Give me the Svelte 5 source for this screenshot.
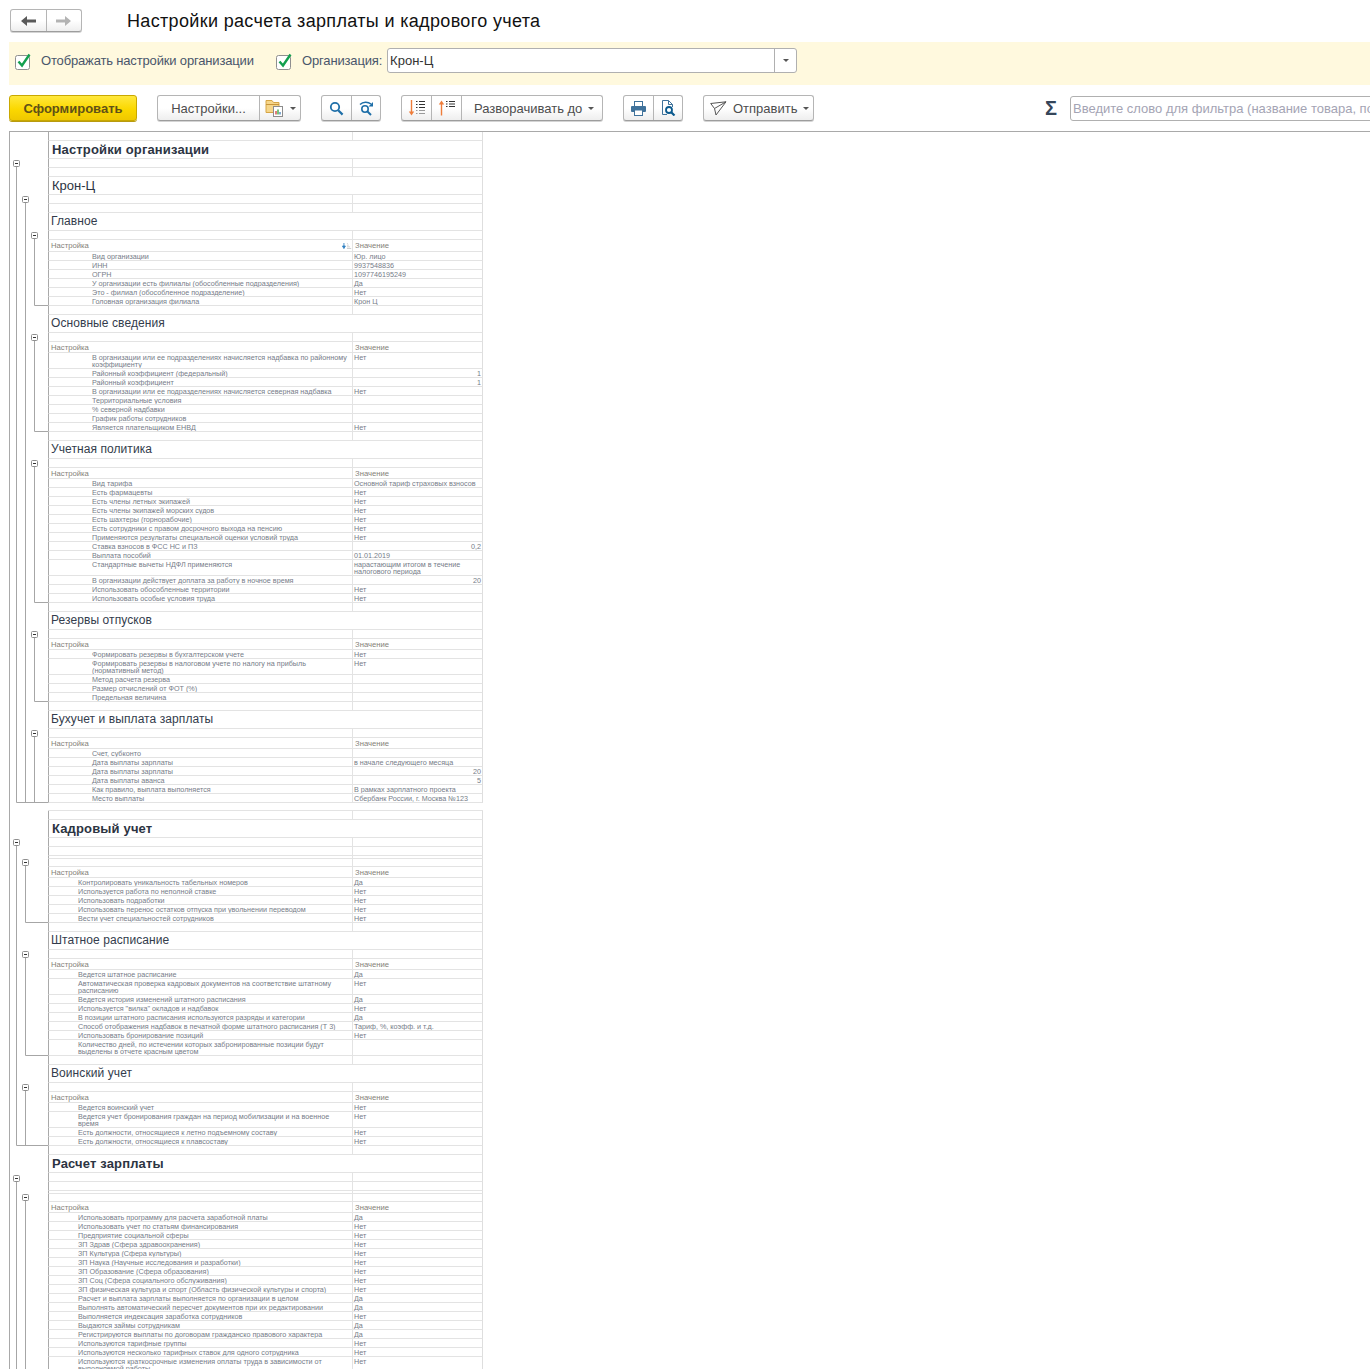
<script lang="ts">
  type Row = { kind: string; text?: string; value?: string; num?: boolean; indent?: string; sort?: boolean };

  // "label|value", a value starting with # is a right-aligned number
  function section(title: string, items: string[], indent: string, sort = false): Row[] {
    const rows: Row[] = [
      { kind: 'h2', text: title },
      { kind: 'blank' },
      { kind: sort ? 'head sorted' : 'head', sort }
    ];
    return rows.concat(items.map(parseItem(indent)), { kind: 'blank' });
  }

  function parseItem(indent: string) {
    return (item: string): Row => {
      const [text, value = ''] = item.split('|');
      const num = value.startsWith('#');
      const two = text.includes('\n') || value.includes('\n');
      return { kind: two ? 'row two' : 'row', text, value: num ? value.slice(1) : value, num, indent };
    };
  }

  const rows: Row[] = [
    { kind: 'blank' },
    { kind: 'h1', text: 'Настройки организации' },
    { kind: 'blank' },
    { kind: 'blank' },
    { kind: 'h1 org', text: 'Крон-Ц' },
    { kind: 'blank' },
    { kind: 'blank' },
    ...section('Главное', [
      'Вид организации|Юр. лицо',
      'ИНН|9937548836',
      'ОГРН|1097746195249',
      'У организации есть филиалы (обособленные подразделения)|Да',
      'Это - филиал (обособленное подразделение)|Нет',
      'Головная организация филиала|Крон Ц'
    ], 'deep', true),
    ...section('Основные сведения', [
      'В организации или ее подразделениях начисляется надбавка по районному\nкоэффициенту|Нет',
      'Районный коэффициент (федеральный)|#1',
      'Районный коэффициент|#1',
      'В организации или ее подразделениях начисляется северная надбавка|Нет',
      'Территориальные условия',
      '% северной надбавки',
      'График работы сотрудников',
      'Является плательщиком ЕНВД|Нет'
    ], 'deep'),
    ...section('Учетная политика', [
      'Вид тарифа|Основной тариф страховых взносов',
      'Есть фармацевты|Нет',
      'Есть члены летных экипажей|Нет',
      'Есть члены экипажей морских судов|Нет',
      'Есть шахтеры (горнорабочие)|Нет',
      'Есть сотрудники с правом досрочного выхода на пенсию|Нет',
      'Применяются результаты специальной оценки условий труда|Нет',
      'Ставка взносов в ФСС НС и ПЗ|#0,2',
      'Выплата пособий|01.01.2019',
      'Стандартные вычеты НДФЛ применяются|нарастающим итогом в течение\nналогового периода',
      'В организации действует доплата за работу в ночное время|#20',
      'Использовать обособленные территории|Нет',
      'Использовать особые условия труда|Нет'
    ], 'deep'),
    ...section('Резервы отпусков', [
      'Формировать резервы в бухгалтерском учете|Нет',
      'Формировать резервы в налоговом учете по налогу на прибыль\n(нормативный метод)|Нет',
      'Метод расчета резерва',
      'Размер отчислений от ФОТ (%)',
      'Предельная величина'
    ], 'deep'),
    ...section('Бухучет и выплата зарплаты', [
      'Счет, субконто',
      'Дата выплаты зарплаты|в начале следующего месяца',
      'Дата выплаты зарплаты|#20',
      'Дата выплаты аванса|#5',
      'Как правило, выплата выполняется|В рамках зарплатного проекта',
      'Место выплаты|Сбербанк России, г. Москва №123'
    ], 'deep').slice(0, -1),
    { kind: 'gap' },
    { kind: 'blank' },
    { kind: 'h1', text: 'Кадровый учет' },
    { kind: 'blank' },
    { kind: 'blank' },
    { kind: 'thin' },
    { kind: 'blank low' },
    { kind: 'head' },
    ...[
      'Контролировать уникальность табельных номеров|Да',
      'Используется работа по неполной ставке|Нет',
      'Использовать подработки|Нет',
      'Использовать перенос остатков отпуска при увольнении переводом|Нет',
      'Вести учет специальностей сотрудников|Нет'
    ].map(parseItem('mid')),
    { kind: 'blank' },
    ...section('Штатное расписание', [
      'Ведется штатное расписание|Да',
      'Автоматическая проверка кадровых документов на соответствие штатному\nрасписанию|Нет',
      'Ведется история изменений штатного расписания|Да',
      'Используется "вилка" окладов и надбавок|Нет',
      'В позиции штатного расписания используются разряды и категории|Да',
      'Способ отображения надбавок в печатной форме штатного расписания (Т 3)|Тариф, %, коэфф. и т.д.',
      'Использовать бронирование позиций|Нет',
      'Количество дней, по истечении которых забронированные позиции будут\nвыделены в отчете красным цветом'
    ], 'mid'),
    ...section('Воинский учет', [
      'Ведется воинский учет|Нет',
      'Ведется учет бронирования граждан на период мобилизации и на военное\nвремя|Нет',
      'Есть должности, относящиеся к летно подъемному составу|Нет',
      'Есть должности, относящиеся к плавсоставу|Нет'
    ], 'mid'),
    { kind: 'h1', text: 'Расчет зарплаты' },
    { kind: 'blank' },
    { kind: 'blank' },
    { kind: 'thin' },
    { kind: 'blank low' },
    { kind: 'head' },
    ...[
      'Использовать программу для расчета заработной платы|Да',
      'Использовать учет по статьям финансирования|Нет',
      'Предприятие социальной сферы|Нет',
      'ЗП Здрав (Сфера здравоохранения)|Нет',
      'ЗП Культура (Сфера культуры)|Нет',
      'ЗП Наука (Научные исследования и разработки)|Нет',
      'ЗП Образование (Сфера образования)|Нет',
      'ЗП Соц (Сфера социального обслуживания)|Нет',
      'ЗП физическая культура и спорт (Область физической культуры и спорта)|Нет',
      'Расчет и выплата зарплаты выполняется по организации в целом|Да',
      'Выполнять автоматический пересчет документов при их редактировании|Да',
      'Выполняется индексация заработка сотрудников|Нет',
      'Выдаются займы сотрудникам|Да',
      'Регистрируются выплаты по договорам гражданско правового характера|Да',
      'Используются тарифные группы|Нет',
      'Используются несколько тарифных ставок для одного сотрудника|Нет',
      'Используются краткосрочные изменения оплаты труда в зависимости от\nвыполняемой работы|Нет'
    ].map(parseItem('mid'))
  ];

  // outline tree in the gutter, in page coordinates: x, y of the box, y of the end, closes with a bracket
  const tree = [
    { x: 16, y: 163, end: 802, foot: true },
    { x: 25, y: 199, end: 802, foot: false },
    { x: 34, y: 235, end: 305, foot: true },
    { x: 34, y: 337, end: 431, foot: true },
    { x: 34, y: 463, end: 602, foot: true },
    { x: 34, y: 634, end: 701, foot: true },
    { x: 34, y: 733, end: 802, foot: false },
    { x: 16, y: 842, end: 1145, foot: true },
    { x: 25, y: 862, end: 922, foot: true },
    { x: 25, y: 954, end: 1055, foot: true },
    { x: 25, y: 1087, end: 1145, foot: false },
    { x: 16, y: 1178, end: 1369, foot: false },
    { x: 25, y: 1197, end: 1369, foot: false }
  ];
</script>

{#snippet check()}
  <svg class="check" width="17" height="18" viewBox="0 0 17 18">
    <rect x="0.5" y="3.5" width="14" height="14" rx="2" fill="#fff" stroke="#8f8f8f" />
    <path d="M3.5 9.5 L7 13.5 L14.5 2.5" fill="none" stroke="#13a04f" stroke-width="2.4" />
  </svg>
{/snippet}

{#snippet caret()}
  <span class="caret"></span>
{/snippet}

<div class="page">
  <header class="titlebar">
    <div class="btn-group nav">
      <button class="seg nav-seg" aria-label="Назад">
        <svg width="16" height="10" viewBox="0 0 16 10"><path d="M0 5 L6 0 V3.4 H15 V6.6 H6 V10 Z" fill="#5a5a5a" /></svg>
      </button>
      <button class="seg nav-seg" aria-label="Вперед">
        <svg width="16" height="10" viewBox="0 0 16 10"><path d="M15 5 L9 0 V3.4 H0 V6.6 H9 V10 Z" fill="#b3b3b3" /></svg>
      </button>
    </div>
    <h1>Настройки расчета зарплаты и кадрового учета</h1>
  </header>

  <section class="params">
    {@render check()}
    <span class="param-label first">Отображать настройки организации</span>
    {@render check()}
    <span class="param-label">Организация:</span>
    <div class="org-field">
      <span class="org-value">Крон-Ц</span>
      <span class="org-drop">{@render caret()}</span>
    </div>
  </section>

  <div class="toolbar">
    <button class="primary">Сформировать</button>

    <div class="btn-group">
      <button class="seg settings">Настройки...</button>
      <button class="seg variant">
        <svg width="20" height="20" viewBox="0 0 20 20">
          <path d="M1 5.5 V2.5 H7 L8.5 4.5 H14 V14.5 H1 Z" fill="#f6d68a" stroke="#d6a545" />
          <path d="M1 6.5 H14" stroke="#c9963a" />
          <rect x="8.5" y="8.5" width="9" height="10" fill="#fff" stroke="#8c8c8c" />
          <path d="M11 16.5 V13" stroke="#d9534f" stroke-width="1.5" />
          <path d="M13 16.5 V11.5" stroke="#4caf50" stroke-width="1.5" />
          <path d="M15 16.5 V14" stroke="#5a8fc4" stroke-width="1.5" />
        </svg>
        {@render caret()}
      </button>
    </div>

    <div class="btn-group">
      <button class="seg icon" aria-label="Найти">
        <svg width="15" height="15" viewBox="0 0 15 15">
          <circle cx="6" cy="6" r="4.2" fill="none" stroke="#1f6fa8" stroke-width="1.8" />
          <path d="M9.2 9.2 L13.6 13.6" stroke="#1f6fa8" stroke-width="2.2" />
        </svg>
      </button>
      <button class="seg icon" aria-label="Найти далее">
        <svg width="15" height="15" viewBox="0 0 15 15">
          <path d="M1 3.5 C4 0.5 9 0.5 12 3" fill="none" stroke="#1f6fa8" stroke-width="1.5" />
          <path d="M14 1 V5.5 H9.5 Z" fill="#1f6fa8" />
          <circle cx="6" cy="8" r="3.2" fill="none" stroke="#1f6fa8" stroke-width="1.6" />
          <path d="M8.5 10.5 L12 14" stroke="#1f6fa8" stroke-width="2" />
        </svg>
      </button>
    </div>

    <div class="btn-group">
      <button class="seg icon" aria-label="Развернуть">
        <svg width="18" height="16" viewBox="0 0 18 16">
          <path d="M3.5 0 V13" stroke="#ee7d3b" stroke-width="1.4" />
          <path d="M0.8 11.5 H6.2 L3.5 15.5 Z" fill="#ee7d3b" />
          <path d="M8 1.5 H9.5 M11 1.5 H17 M8 4.5 H9.5 M11 4.5 H17 M8 7.5 H9.5 M11 7.5 H17" stroke="#333" />
          <path d="M8 10.5 H9.5 M11 10.5 H17 M8 13.5 H9.5 M11 13.5 H17" stroke="#9a9a9a" />
        </svg>
      </button>
      <button class="seg icon wide" aria-label="Свернуть">
        <svg width="18" height="16" viewBox="0 0 18 16">
          <path d="M3.5 15.5 V3" stroke="#ee7d3b" stroke-width="1.4" />
          <path d="M0.8 4.5 H6.2 L3.5 0.5 Z" fill="#ee7d3b" />
          <path d="M8 1.5 H9.5 M11 1.5 H17 M8 4 H9.5 M11 4 H17 M8 6.5 H9.5 M11 6.5 H17" stroke="#333" />
        </svg>
      </button>
      <button class="seg expand">Разворачивать до {@render caret()}</button>
    </div>

    <div class="btn-group">
      <button class="seg icon" aria-label="Печать">
        <svg width="15" height="15" viewBox="0 0 15 15">
          <rect x="3.5" y="0.5" width="8" height="5" fill="#fff" stroke="#3f729b" />
          <rect x="0" y="5" width="15" height="6" rx="1" fill="#3f729b" />
          <rect x="3.5" y="9" width="8" height="5.5" fill="#fff" stroke="#3f729b" />
        </svg>
      </button>
      <button class="seg icon" aria-label="Предварительный просмотр">
        <svg width="15" height="16" viewBox="0 0 15 16">
          <path d="M1.5 14.5 V0.5 H7.5 L11.5 4.5 V7 M7.5 0.5 V4.5 H11.5 M1.5 14.5 H6" fill="none" stroke="#3f729b" />
          <circle cx="8" cy="10" r="3" fill="#fff" stroke="#0b5a8e" stroke-width="1.8" />
          <path d="M10 12 L13.5 15.5" stroke="#0b5a8e" stroke-width="2.2" />
        </svg>
      </button>
    </div>

    <button class="single">
      <svg width="17" height="15" viewBox="0 0 17 15">
        <path d="M0.7 2.5 L16 0.8 L6 14 L4.5 7.5 Z M4.5 7.5 L16 0.8" fill="none" stroke="#555" />
      </svg>
      Отправить {@render caret()}
    </button>

    <span class="sigma">Σ</span>
    <input class="filter" placeholder="Введите слово для фильтра (название товара, поставщика)" />
  </div>

  <div class="report">
    <div class="gutter">
      <svg width="38" height="1237" viewBox="10 132 38 1237">
        {#each tree as node}
          <path d="M{node.x + 0.5} {node.y} V{node.end + 0.5}{node.foot ? ` H48` : ''}" fill="none" stroke="#a6a6a6" />
        {/each}
        <path d="M34.5 802.5 H48" stroke="#a6a6a6" />
        {#each tree as node}
          <rect x={node.x - 2.5} y={node.y - 2.5} width="6" height="6" rx="1" fill="#fff" stroke="#8f8f8f" />
          <path d="M{node.x - 1} {node.y + 0.5} H{node.x + 2}" stroke="#333" />
        {/each}
      </svg>
    </div>

    <div class="sheet">
      {#each rows as row}
        <div class="rp {row.kind}">
          {#if row.kind.startsWith('h1') || row.kind === 'h2'}
            <div class="span">{row.text}</div>
          {:else if row.kind.startsWith('head')}
            <div class="cell name">
              Настройка
              {#if row.sort}
                <svg class="sort" width="11" height="6" viewBox="0 0 11 7">
                  <path d="M2.5 0 V4 M0.8 3.5 H4.2 L2.5 6.5 Z" fill="#2f7fc1" stroke="#2f7fc1" />
                  <path d="M6 6.5 H11 M6 4.5 H9.5 M6 2.5 H8 M6 0.5 H7" stroke="#c4c4c4" />
                </svg>
              {/if}
            </div>
            <div class="cell val">Значение</div>
          {:else if row.kind.startsWith('row')}
            <div class="cell name {row.indent}">{row.text}</div>
            <div class="cell val" class:num={row.num}>{row.value}</div>
          {:else if row.kind !== 'gap'}
            <div class="cell"></div>
            <div class="cell"></div>
          {/if}
        </div>
      {/each}
    </div>
  </div>
</div>

<style>
  :global(body) {
    margin: 0;
    background: #fff;
  }

  .page {
    width: 1370px;
    height: 1369px;
    overflow: hidden;
    font-family: "Liberation Sans", Arial, sans-serif;
    color: #4d4d4d;
  }

  button {
    font: inherit;
    color: inherit;
    cursor: pointer;
  }

  .titlebar {
    display: flex;
    align-items: center;
    height: 42px;
    box-sizing: border-box;
    padding: 0 0 0 10px;
  }

  .titlebar h1 {
    margin: 0 0 0 45px;
    font-size: 18px;
    font-weight: 400;
    letter-spacing: 0.34px;
    color: #111;
  }

  .btn-group {
    display: flex;
    flex: none;
    height: 26px;
    box-sizing: border-box;
    border: 1px solid #b5b5b5;
    border-bottom-color: #9d9d9d;
    border-radius: 3px;
    background: linear-gradient(#fff, #fff 50%, #eeeeee);
    box-shadow: 0 1px 0 #d4d4d4;
  }

  .btn-group.nav {
    height: 23px;
    margin-top: -1px;
  }

  .seg {
    display: flex;
    align-items: center;
    justify-content: center;
    background: none;
    border: 0;
    border-left: 1px solid #b5b5b5;
    padding: 0;
    height: 100%;
  }

  .seg:first-child {
    border-left: 0;
  }

  .nav-seg {
    width: 35px;
  }

  .params {
    display: flex;
    align-items: center;
    height: 43px;
    margin-left: 9px;
    box-sizing: border-box;
    padding: 0 0 6px 6px;
    background: #fff9de;
    font-size: 13px;
  }

  .check {
    flex: none;
  }

  .param-label {
    flex: none;
    margin-left: 9px;
    color: #4a566b;
    letter-spacing: -0.16px;
  }

  .param-label.first {
    width: 214px;
    margin-right: 21px;
  }

  .org-field {
    display: flex;
    align-items: center;
    justify-content: space-between;
    width: 410px;
    height: 25px;
    margin-left: 5px;
    box-sizing: border-box;
    border: 1px solid #b0b0b0;
    border-radius: 3px;
    background: #fff;
  }

  .org-value {
    padding-left: 2px;
    color: #333;
  }

  .org-drop {
    display: flex;
    align-items: center;
    justify-content: center;
    width: 21px;
    height: 100%;
    border-left: 1px solid #b0b0b0;
  }

  .caret {
    display: inline-block;
    width: 0;
    height: 0;
    border: 3.5px solid transparent;
    border-top: 3.5px solid #555;
    border-bottom: 0;
  }

  .toolbar {
    display: flex;
    align-items: center;
    gap: 20px;
    height: 26px;
    margin: 10px 0 0 9px;
    font-size: 13px;
    overflow: hidden;
    padding-bottom: 2px;
  }

  .primary {
    width: 128px;
    height: 26px;
    padding: 0;
    flex: none;
    border: 1px solid #c9a800;
    border-radius: 3px;
    background: linear-gradient(#ffe83d, #fbd800 55%, #efc800);
    box-shadow: 0 1px 0 #b89b10;
    font-weight: 700;
    color: #5f5118;
  }

  .settings {
    width: 101px;
  }

  .variant {
    width: 41px;
    gap: 5px;
  }

  .icon {
    width: 29px;
  }

  .icon.wide {
    width: 30px;
  }

  .expand {
    width: 141px;
    gap: 6px;
    justify-content: flex-start;
    padding-left: 12px;
  }

  .single {
    display: flex;
    align-items: center;
    gap: 6px;
    flex: none;
    width: 111px;
    height: 26px;
    padding: 0 0 0 6px;
    border: 1px solid #b5b5b5;
    border-bottom-color: #9d9d9d;
    border-radius: 3px;
    background: linear-gradient(#fff, #fff 50%, #eeeeee);
    box-shadow: 0 1px 0 #d4d4d4;
  }

  .sigma {
    margin-left: 209px;
    font-size: 20px;
    font-weight: 700;
    color: #35465a;
    width: 16px;
    flex: none;
    text-align: center;
    line-height: 26px;
  }

  .filter {
    flex: none;
    width: 320px;
    height: 25px;
    margin-left: -9px;
    box-sizing: border-box;
    border: 1px solid #b0b0b0;
    border-radius: 3px;
    padding: 0 2px;
    font: inherit;
    outline: none;
  }

  .filter::placeholder {
    color: #a4a4b4;
    opacity: 1;
  }

  .report {
    display: flex;
    margin: 8px 0 0 9px;
    border-top: 1px solid #a9a9a9;
    border-left: 1px solid #a9a9a9;
  }

  .gutter {
    flex: none;
    width: 38px;
  }

  .gutter svg {
    display: block;
  }

  .sheet {
    flex: none;
    width: 435px;
  }

  .rp {
    display: grid;
    grid-template-columns: 304px 129px;
    box-sizing: border-box;
    height: 9px;
    border-left: 1px solid #a9a9a9;
    border-right: 1px solid #dedede;
    border-bottom: 1px solid #e3e3e3;
    font-size: 7.2px;
    line-height: 8px;
    color: #767c88;
  }

  .rp.blank.low {
    height: 8px;
  }

  .rp.thin {
    height: 3px;
  }

  .rp.gap {
    height: 8px;
    border-left: 0;
    border-right: 0;
  }

  .rp.h1,
  .rp.h2 {
    display: block;
    height: 18px;
  }

  .span {
    line-height: 17px;
    padding-left: 3px;
    white-space: nowrap;
  }

  .rp.h1 {
    font-size: 13px;
    font-weight: 700;
    letter-spacing: 0.15px;
    color: #2c3442;
  }

  .rp.h1.org {
    font-weight: 400;
    letter-spacing: 0;
  }

  .rp.h2 {
    font-size: 12px;
    letter-spacing: 0.08px;
    color: #333c4c;
  }

  .rp.h2 .span {
    padding-left: 2px;
  }

  .rp.head {
    height: 11px;
    font-size: 7.7px;
    line-height: 10px;
    color: #857f78;
  }

  .rp.head.sorted {
    height: 12px;
  }

  .rp.two {
    height: 16px;
    line-height: 7px;
  }

  .cell {
    position: relative;
    overflow: hidden;
    box-sizing: border-box;
    padding-top: 1px;
    white-space: pre-line;
    border-right: 1px solid #e3e3e3;
  }

  .cell:last-child {
    border-right: 0;
  }

  .name {
    padding-left: 2px;
  }

  .name.deep {
    padding-left: 43px;
  }

  .name.mid {
    padding-left: 29px;
  }

  .val {
    padding-left: 1px;
  }

  .head .val {
    padding-left: 2px;
  }

  .val.num {
    text-align: right;
    padding-right: 1px;
  }

  .sort {
    position: absolute;
    right: 0;
    top: 3px;
  }
</style>
